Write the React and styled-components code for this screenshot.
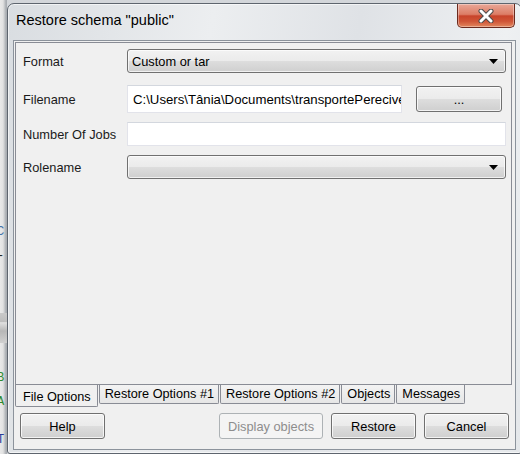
import React from "react";
import styled, { createGlobalStyle } from "styled-components";

const GlobalStyle = createGlobalStyle`
  html, body { margin: 0; padding: 0; }
  body {
    background: #d3d6da;
    font-family: "Liberation Sans", Arial, sans-serif;
  }
`;

const tabs = [
  { label: "File Options", active: true },
  { label: "Restore Options #1" },
  { label: "Restore Options #2" },
  { label: "Objects" },
  { label: "Messages" },
];

const App = () => {
  return (
    <>
      <GlobalStyle />
      <Desktop>
        <BehindStrip>
          <StripGlyph $top={226} $color="#3d6fa8">C</StripGlyph>
          <StripGlyph $top={12} $color="#222">-</StripGlyph>
          <StripBand $top={51} />
          <StripGlyph $top={29} $color="#2f8a2f">B</StripGlyph>
          <StripGlyph $top={12} $color="#2f8a2f">A</StripGlyph>
          <StripGlyph $top={26} $color="#2b3a9a">T</StripGlyph>
        </BehindStrip>
        <Window>
          <TitleBar>
            <Title>Restore schema "public"</Title>
            <CloseButton aria-label="Close">
              <svg width="18" height="14" viewBox="0 0 18 14">
                <path
                  d="M4 2 L14 12 M14 2 L4 12"
                  stroke="#4b4b4b"
                  strokeWidth="5"
                  strokeLinecap="round"
                />
                <path
                  d="M4 2 L14 12 M14 2 L4 12"
                  stroke="#ffffff"
                  strokeWidth="3"
                  strokeLinecap="round"
                />
              </svg>
            </CloseButton>
          </TitleBar>
          <Client>
            <Page>
              <FormRow>
                <Label>Format</Label>
                <Combo>
                  <ComboText>Custom or tar</ComboText>
                  <Arrow />
                </Combo>
              </FormRow>
              <FormRow $height={28} $gap={12}>
                <Label>Filename</Label>
                <Field>
                  <TextInput $width={275}>
                    C:\Users\Tânia\Documents\transportePerecivel.backup
                  </TextInput>
                  <Button $width={86} $height={26}>...</Button>
                </Field>
              </FormRow>
              <FormRow $gap={9}>
                <Label>Number Of Jobs</Label>
                <TextInput />
              </FormRow>
              <FormRow $gap={9}>
                <Label>Rolename</Label>
                <Combo>
                  <ComboText />
                  <Arrow />
                </Combo>
              </FormRow>
            </Page>
            <TabStrip>
              {tabs.map((t) => (
                <Tab key={t.label} $active={t.active}>
                  {t.label}
                </Tab>
              ))}
            </TabStrip>
            <ButtonRow>
              <Button $width={85}>Help</Button>
              <Button $width={104} $disabled $push>
                Display objects
              </Button>
              <Button $width={85}>Restore</Button>
              <Button $width={85}>Cancel</Button>
            </ButtonRow>
          </Client>
        </Window>
      </Desktop>
    </>
  );
};

const Arrow = () => (
  <svg width="9" height="5" viewBox="0 0 9 5">
    <polygon points="0,0 9,0 4.5,5" fill="#000" />
  </svg>
);

export default App;

const Desktop = styled.div`
  display: flex;
  width: 520px;
  height: 454px;
  overflow: hidden;
`;

const BehindStrip = styled.div`
  width: 7px;
  flex-shrink: 0;
  display: flex;
  flex-direction: column;
  overflow: hidden;
  background: linear-gradient(90deg, #e9e9e9 0, #e2e2e2 3px, #a9adb2 6px);
`;

const StripGlyph = styled.span`
  margin-top: ${(p) => p.$top}px;
  margin-left: -3px;
  height: 12px;
  line-height: 12px;
  font-family: "Liberation Mono", monospace;
  font-size: 12px;
  color: ${(p) => p.$color};
`;

const StripBand = styled.div`
  margin-top: ${(p) => p.$top}px;
  height: 30px;
  background: linear-gradient(#c9c9c9, #bdbdbd 30%, #e0e0e0 32%, #b7b7b7 60%, #d0d0d0);
`;

const Window = styled.div`
  width: 503px;
  height: 446px;
  margin-top: 3px;
  flex-shrink: 0;
  display: flex;
  flex-direction: column;
  padding: 0 5px 3px 5px;
  border: 1px solid #5e656e;
  border-radius: 7px 7px 3px 3px;
  background: linear-gradient(
    100deg,
    #d9dde1 0%,
    #eceef0 35%,
    #dfe2e6 60%,
    #eef0f2 85%,
    #e4e7ea 100%
  );
  box-shadow: inset 0 0 0 1px rgba(255, 255, 255, 0.6);
`;

const TitleBar = styled.div`
  height: 36px;
  flex-shrink: 0;
  display: flex;
  align-items: flex-start;
  justify-content: space-between;
`;

const Title = styled.div`
  margin-top: 8px;
  padding-left: 3px;
  font-family: "Liberation Sans", Arial, sans-serif;
  font-size: 14.5px;
  color: #000;
`;

const CloseButton = styled.div`
  width: 58px;
  height: 24px;
  margin-right: 1px;
  display: flex;
  align-items: center;
  justify-content: center;
  box-sizing: border-box;
  border: 1px solid #6b2a1e;
  border-top: none;
  border-radius: 0 0 5px 5px;
  background: linear-gradient(
    #e9a797 0%,
    #dc7d66 45%,
    #c8442b 52%,
    #cf5537 75%,
    #e2875e 100%
  );
  box-shadow: inset 0 0 0 1px rgba(255, 255, 255, 0.35);
`;

const Client = styled.div`
  flex: 1;
  display: flex;
  flex-direction: column;
  padding: 1px 0 9px 1px;
  border: 1px solid #8c939c;
  background: #f0f0f0;
`;

const Page = styled.div`
  height: 343px;
  box-sizing: border-box;
  flex-shrink: 0;
  margin-right: 3px;
  padding: 6px 5px 0 7px;
  border: 1px solid #898c95;
  display: flex;
  flex-direction: column;
`;

const FormRow = styled.div`
  display: grid;
  grid-template-columns: 104px 1fr;
  align-items: center;
  height: ${(p) => p.$height || 24}px;
  margin-top: ${(p) => p.$gap || 0}px;
`;

const Label = styled.div`
  font-size: 12.8px;
  color: #1a1a1a;
`;

const Field = styled.div`
  display: flex;
  align-items: center;
  gap: 14px;
`;

const winGradient = `linear-gradient(
  #f2f2f2 0%,
  #ebebeb 48%,
  #dddddd 52%,
  #cfcfcf 100%
)`;

const Combo = styled.div`
  height: 24px;
  box-sizing: border-box;
  display: flex;
  align-items: center;
  justify-content: space-between;
  padding: 0 7px 0 4px;
  border: 1px solid #707070;
  border-radius: 3px;
  background: ${winGradient};
  box-shadow: inset 0 0 0 1px rgba(255, 255, 255, 0.7);
`;

const ComboText = styled.span`
  font-size: 12.8px;
  color: #000;
`;

const TextInput = styled.div`
  width: ${(p) => (p.$width ? `${p.$width}px` : "auto")};
  height: ${(p) => (p.$width ? 28 : 24)}px;
  box-sizing: border-box;
  padding: 0 5px;
  display: flex;
  align-items: center;
  overflow: hidden;
  white-space: nowrap;
  font-size: 13.2px;
  color: #000;
  background: #fff;
  border: 1px solid #e2e3ea;
  border-top-color: #d3d7de;
`;

const Button = styled.div`
  width: ${(p) => p.$width}px;
  height: ${(p) => p.$height || 26}px;
  box-sizing: border-box;
  display: flex;
  align-items: center;
  justify-content: center;
  margin-left: ${(p) => (p.$push ? "auto" : "0")};
  font-size: 12.8px;
  color: ${(p) => (p.$disabled ? "#8d8d8d" : "#000")};
  border: 1px solid ${(p) => (p.$disabled ? "#adb2b5" : "#707070")};
  border-radius: 3px;
  background: ${(p) => (p.$disabled ? "#f4f4f4" : winGradient)};
  box-shadow: inset 0 0 0 1px
    ${(p) => (p.$disabled ? "transparent" : "rgba(255, 255, 255, 0.75)")};
`;

const TabStrip = styled.div`
  height: 22px;
  flex-shrink: 0;
  display: flex;
  align-items: flex-start;
  gap: 1px;
`;

const Tab = styled.div`
  height: 18px;
  padding: ${(p) => (p.$active ? "3px 6px 0 7px" : "0 4px 0 5px")};
  display: flex;
  align-items: center;
  font-size: 12.7px;
  color: #000;
  white-space: nowrap;
  border: 1px solid #898c95;
  border-top: none;
  border-radius: 0 0 2px 2px;
  background: ${(p) =>
    p.$active ? "#f0f0f0" : "linear-gradient(#f3f3f3, #e6e6e6)"};
`;

const ButtonRow = styled.div`
  display: flex;
  align-items: center;
  gap: 8px;
  margin-top: 6px;
  padding: 0 6px 0 5px;
`;
